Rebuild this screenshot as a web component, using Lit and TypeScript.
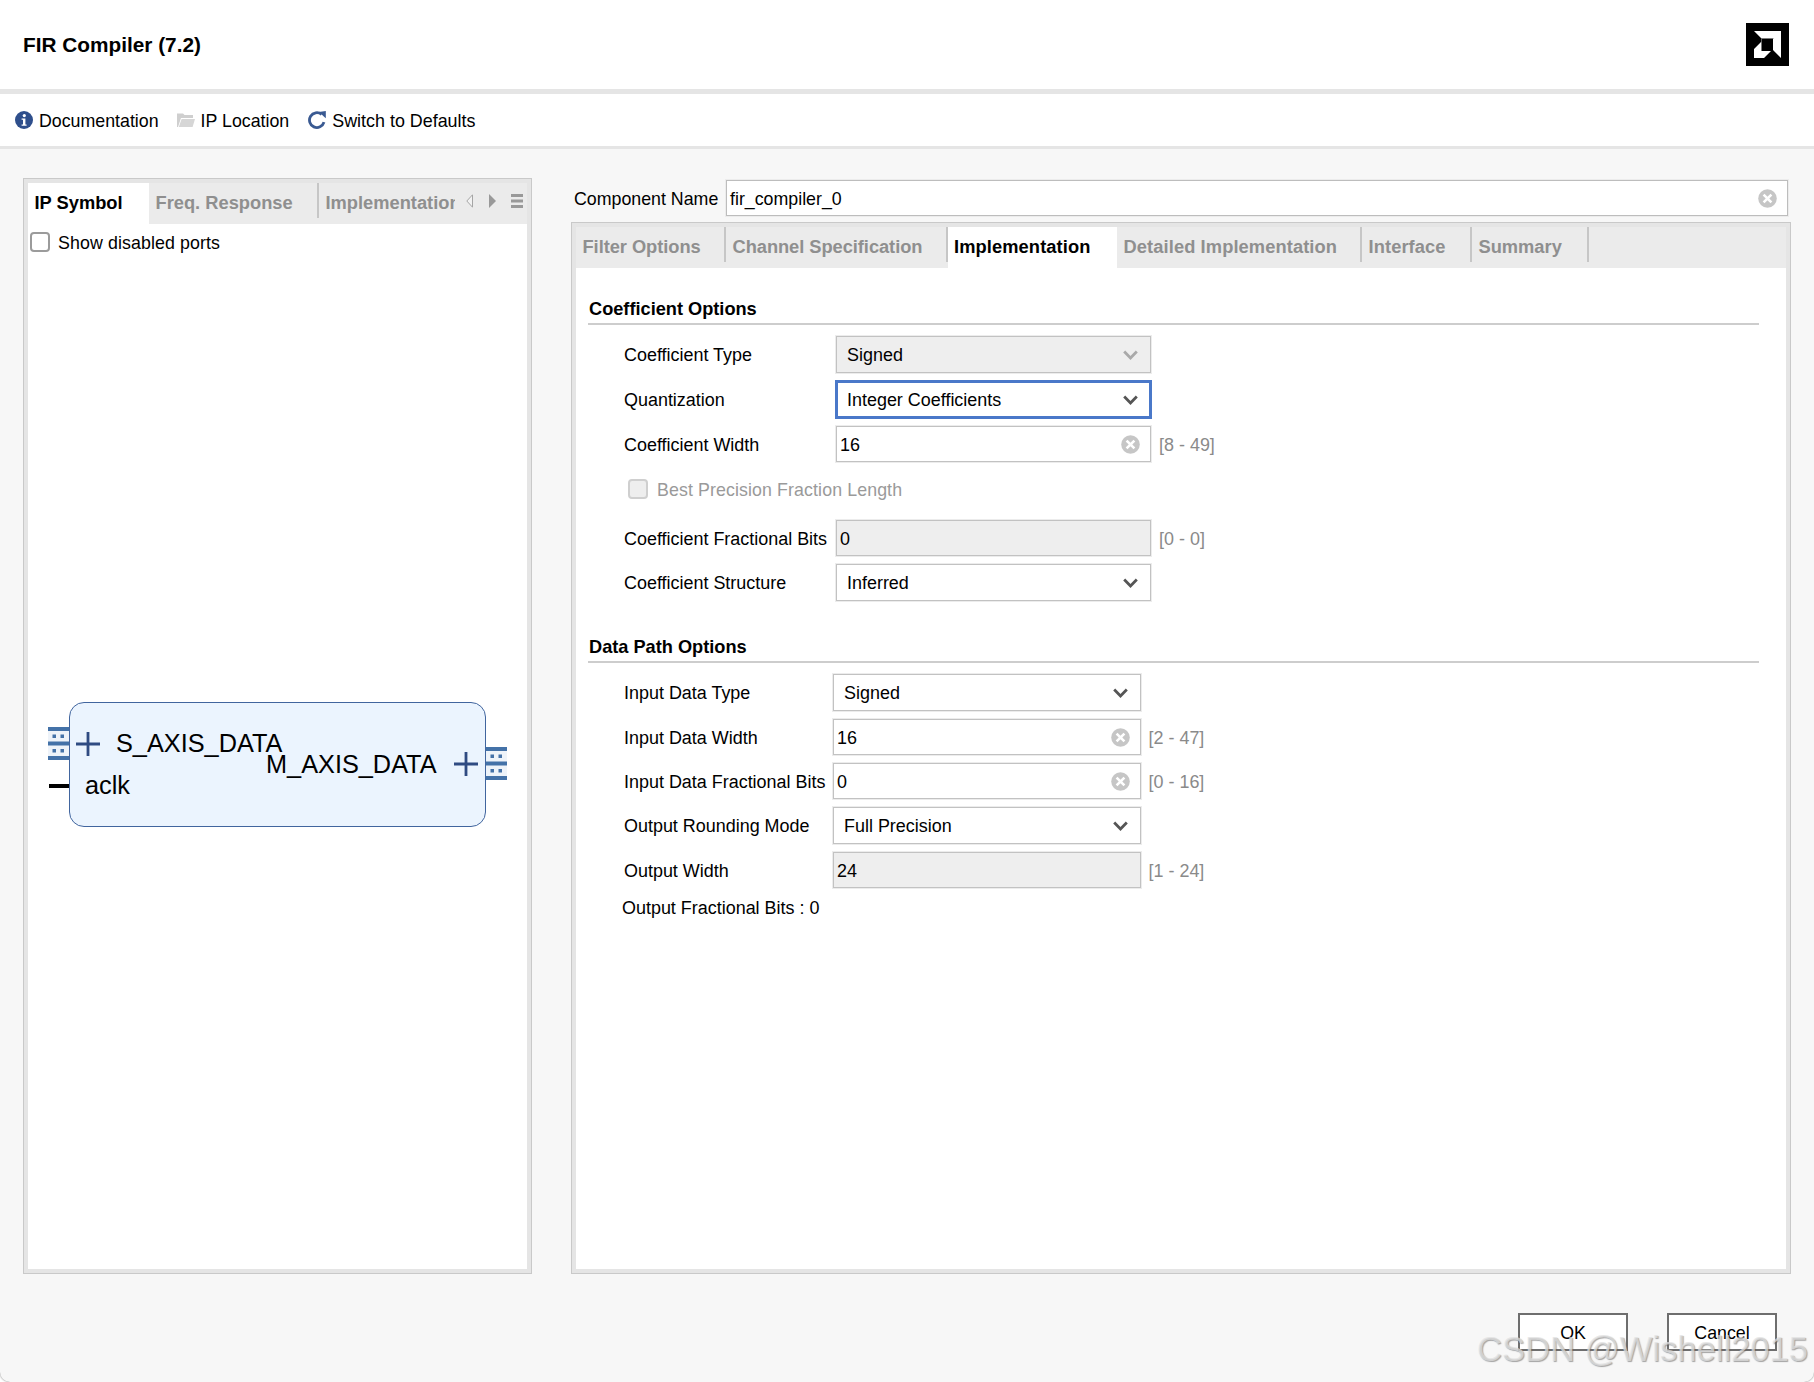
import { LitElement, html, css, svg } from "lit";
import { customElement } from "lit/decorators.js";

const clearIcon = () => html`<svg class="clear" width="19" height="19" viewBox="0 0 19 19"><circle cx="9.5" cy="9.5" r="9.3" fill="#c6c6c6"/><path d="M5.6 5.6l7.8 7.8M13.4 5.6l-7.8 7.8" stroke="#fff" stroke-width="2.6" fill="none"/></svg>`;
const chevron = (dis: boolean) => html`<svg class="chev" width="15" height="10" viewBox="0 0 15 10"><path d="M1.2 1.6L7.5 8l6.3-6.4" stroke="${dis ? "#a9a9a9" : "#555"}" stroke-width="2.8" fill="none"/></svg>`;

type Row = { label: string; kind: "sel" | "input" | "ro" | "seld" | "focus"; value: string; range?: string; h: number };

const coef: Row[] = [
  { label: "Coefficient Type", kind: "seld", value: "Signed", h: 37 },
  { label: "Quantization", kind: "focus", value: "Integer Coefficients", h: 37 },
  { label: "Coefficient Width", kind: "input", value: "16", range: "[8 - 49]", h: 36 },
];
const coef2: Row[] = [
  { label: "Coefficient Fractional Bits", kind: "ro", value: "0", range: "[0 - 0]", h: 36 },
  { label: "Coefficient Structure", kind: "sel", value: "Inferred", h: 37 },
];
const dataRows: Row[] = [
  { label: "Input Data Type", kind: "sel", value: "Signed", h: 37 },
  { label: "Input Data Width", kind: "input", value: "16", range: "[2 - 47]", h: 36 },
  { label: "Input Data Fractional Bits", kind: "input", value: "0", range: "[0 - 16]", h: 36 },
  { label: "Output Rounding Mode", kind: "sel", value: "Full Precision", h: 37 },
  { label: "Output Width", kind: "ro", value: "24", range: "[1 - 24]", h: 36 },
];

const busPort = svg`<svg width="21" height="33" viewBox="0 0 21 33">
  <rect width="21" height="33" fill="#eef3f9"/>
  <g fill="#4472a8"><rect width="21" height="4"/><rect y="14.500" width="21" height="4"/><rect y="29" width="21" height="4"/>
  <rect x="4.500" y="7.500" width="3.500" height="3.500"/><rect x="12.500" y="7.500" width="3.500" height="3.500"/><rect x="4.500" y="22" width="3.500" height="3.500"/><rect x="12.500" y="22" width="3.500" height="3.500"/></g></svg>`;
const plus = svg`<svg width="24" height="24" viewBox="0 0 24 24"><path d="M12 0v24M0 12h24" stroke="#2f4b82" stroke-width="2.8" fill="none"/></svg>`;

@customElement("app-root")
export class AppRoot extends LitElement {
  static styles = css`
    :host { display: block; width: 1814px; height: 1382px; background: #fff; font-family: "Liberation Sans", Arial, sans-serif; font-size: 17.8px; color: #000; position: relative; overflow: hidden; }
    * { box-sizing: border-box; }
    .win { height: 1382px; display: flex; flex-direction: column; background: #f7f7f7; border-radius: 0 0 10px 10px; box-shadow: 0 0 2px #777; }
    .head { height: 94px; flex: none; background: #fff; border-bottom: 5px solid #e5e5e5; display: flex; align-items: center; justify-content: space-between; padding: 0 25px 0 23px; }
    .title { font-weight: 700; font-size: 20.8px; padding-top: 1px; }
    .logo { display: block; }
    .tool { height: 55px; flex: none; background: #fff; border-bottom: 3px solid #e5e5e5; display: flex; align-items: center; padding-left: 15px; gap: 18px; }
    .ti { display: flex; align-items: center; gap: 6px; }
    .ti span { padding-top: 2px; }
    .ti:last-child { margin-left: 1px; font-size: 17.9px; }
    .main { flex: none; height: 1125px; padding: 29px 23px 0; display: flex; gap: 39px; }
    .left { width: 509px; height: 1096px; border: 1px solid #c9c9c9; background: #e5e5e5; padding: 4px; }
    .linner { height: 100%; background: #fff; display: flex; flex-direction: column; }
    .lstrip { height: 41px; flex: none; background: #ebebeb; display: flex; align-items: stretch; }
    .tab { font-weight: 700; font-size: 18.3px; color: #8f8f8f; display: flex; align-items: center; padding-left: 6.5px; padding-bottom: 2px; position: relative; white-space: nowrap; overflow: hidden; }
    .tab.on { background: #fff; color: #000; }
    .tab.sep::after { content: ""; position: absolute; right: 0; top: 0; height: 35px; width: 2px; background: #c6c6c6; }
    .tab.wide { letter-spacing: .1px; }
    .tab.tight { letter-spacing: -.05px; }
    .lt1 { width: 121px; } .lt2 { width: 170px; } .lt3 { width: 136px; }
    .ctrl { display: flex; flex: 1; align-items: center; padding-bottom: 5px; padding-left: 11px; gap: 15.5px; }
    .showrow { height: 36px; flex: none; display: flex; align-items: center; gap: 8px; padding: 0 0 0 2px; }
    .showrow span, .chk span { padding-top: 2px; letter-spacing: .1px; }
    .cb { width: 20px; height: 20px; border: 2px solid #9b9b9b; border-radius: 4px; background: #fff; flex: none; }
    .cb.dis { border-color: #cfcfcf; background: #eee; }
    .canvas { flex: 1; position: relative; }
    .sym { position: absolute; left: 41px; top: 442px; width: 417px; height: 125px; border: 1.3px solid #41659e; border-radius: 15px; background: #ebf4fe; }
    .bus { position: absolute; display: block; line-height: 0; }
    .bl { left: 20px; top: 467px; }
    .br { left: 458px; top: 487px; }
    .clk { position: absolute; left: 21px; top: 524px; width: 20px; height: 3.5px; background: #000; }
    .pm { position: absolute; display: block; line-height: 0; }
    .pl { left: 48px; top: 472px; }
    .pr { left: 426px; top: 492px; }
    .stx { position: absolute; font-size: 25.3px; line-height: 30px; white-space: nowrap; }
    .right { width: 1220px; display: flex; flex-direction: column; padding-top: 2px; }
    .cname { display: flex; align-items: center; height: 36px; flex: none; padding-left: 3px; }
    .cname .cl { width: 152px; white-space: nowrap; padding-top: 2px; }
    .field { flex: none; width: 1062px; height: 36px; background: #fff; border: 1px solid #bdbdbd; box-shadow: 0 0 0 1px #ececec; display: flex; align-items: center; justify-content: space-between; padding: 0 10px 0 3px; }
    .field span { padding-top: 2px; }
    .rpanel { margin-top: 6px; width: 1220px; height: 1052px; border: 1px solid #c9c9c9; background: #e5e5e5; padding: 4px; }
    .rinner { height: 100%; background: #fff; display: flex; flex-direction: column; }
    .rstrip { height: 41px; flex: none; background: #ebebeb; display: grid; grid-template-columns: 150px 221.5px 169.5px 245px 110px 117px 1fr; }
    .sec { padding-left: 12px; font-size: 17.95px; }
    .sh { width: 1171px; height: 28px; border-bottom: 2px solid #cdcdcd; font-weight: 700; font-size: 18.2px; line-height: 24px; padding-left: 1px; margin-bottom: 11px; }
    .sec1 { margin-top: 29px; }
    .sec2 { margin-top: 34px; }
    .rows { display: flex; flex-direction: column; gap: 8px; padding-left: 36px; }
    .row { display: flex; align-items: stretch; }
    .lb { display: flex; align-items: center; white-space: nowrap; flex: none; padding-top: 1px; }
    .sec1 .lb { width: 212px; } .sec2 .lb { width: 209px; }
    .ctl { flex: none; border: 1px solid #c2c2c2; box-shadow: 0 0 0 1px #ececec; background: #fff; display: flex; align-items: center; justify-content: space-between; padding: 0 10px 0 3px; }
    .ctl span { padding-top: 1px; }
    .sec1 .ctl { width: 315px; } .sec2 .ctl { width: 307.5px; }
    .ctl.sel, .ctl.seld, .ctl.focus { padding-left: 10px; padding-right: 12px; }
    .ctl.ro, .ctl.seld { background: #eee; }
    .ctl.focus { border: 3px solid #4a78c9; box-shadow: none; margin: -1px; padding-left: 9px; padding-right: 11px; }
    .sec1 .ctl.focus { width: 317px; }
    .rng { display: flex; align-items: center; margin-left: 8px; color: #8a8a8a; padding-top: 1px; }
    .even .lb, .even .rng { padding-top: 3px; }
    .even .ctl span { padding-top: 3px; }
    .chk { height: 38px; margin-bottom: 4px; display: flex; align-items: center; gap: 9px; padding-left: 4px; color: #9a9a9a; font-size: 17.8px; }
    .ofb { height: 24px; display: flex; align-items: center; margin-left: -2px; }
    .foot { flex: 1; display: flex; justify-content: flex-end; gap: 39px; padding: 39px 37px 0 0; }
    .btn { width: 110px; height: 38px; background: #fff; border: 2px solid #6e6e6e; display: flex; align-items: center; justify-content: center; padding-top: 3px; }
    .wm { position: absolute; left: 1477px; top: 1329px; font-size: 34.6px; line-height: 40px; color: rgba(226,226,226,.72); text-shadow: 1px 1px 1px rgba(95,95,95,.55); white-space: nowrap; }
  `;

  private renderRow(r: Row) {
    const isSel = r.kind === "sel" || r.kind === "seld" || r.kind === "focus";
    return html`<div class="row ${r.h === 36 ? "even" : ""}" style="height:${r.h}px">
      <div class="lb">${r.label}</div>
      <div class="ctl ${r.kind}">
        <span>${r.value}</span>
        ${isSel ? chevron(r.kind === "seld") : r.kind === "input" ? clearIcon() : ""}
      </div>
      ${r.range ? html`<div class="rng">${r.range}</div>` : ""}
    </div>`;
  }

  render() {
    return html`<div class="win">
      <div class="head">
        <div class="title">FIR Compiler (7.2)</div>
        <svg class="logo" width="43" height="43" viewBox="0 0 43 43">
          <rect width="43" height="43" fill="#000"/>
          <path d="M8 8h27v27l-8-8V15.500H15.500z" fill="#fff"/>
          <path d="M8 26l7.500-7.500v9.500H25l-7 7H8z" fill="#fff"/>
          <path d="M15.500 27.500v-12h12" fill="none" stroke="#777" stroke-width=".8"/>
        </svg>
      </div>
      <div class="tool">
        <div class="ti">
          <svg width="18" height="18" viewBox="0 0 18 18"><circle cx="9" cy="9" r="9" fill="#2f4f8c"/><circle cx="9.300" cy="4.600" r="1.600" fill="#fff"/><path d="M6.600 7.400h3.800v6h1.200v1.400H6.600v-1.400h1.400V8.800H6.600z" fill="#fff"/></svg>
          <span>Documentation</span>
        </div>
        <div class="ti">
          <svg width="18" height="18" viewBox="0 0 18 18"><path d="M0 2.500h6l1.500 1.500H16V7H4L1 16H0z" fill="#cfcfcf"/><path d="M4.600 8H18l-2.400 8H1.800z" fill="#d6d6d6"/></svg>
          <span>IP Location</span>
        </div>
        <div class="ti">
          <svg width="18" height="18" viewBox="0 0 18 18"><path d="M16 11.200A7.400 7.400 0 1 1 13.600 3.400" fill="none" stroke="#3a5a92" stroke-width="2.800"/><path d="M10.800 1L17.800 0v7.200z" fill="#3a5a92"/></svg>
          <span>Switch to Defaults</span>
        </div>
      </div>
      <div class="main">
        <div class="left">
          <div class="linner">
            <div class="lstrip">
              <div class="tab on lt1">IP Symbol</div>
              <div class="tab sep lt2">Freq. Response</div>
              <div class="tab lt3">Implementation</div>
              <div class="ctrl">
                <svg width="7" height="14" viewBox="0 0 7 14"><path d="M6.500 .8L.8 7l5.700 6.200z" fill="#f2f2f2" stroke="#a5a5a5"/></svg>
                <svg width="7" height="14" viewBox="0 0 7 14"><path d="M0 0l7 7-7 7z" fill="#999"/></svg>
                <svg width="12" height="14" viewBox="0 0 12 14"><path d="M0 0h12v3H0zM0 5.500h12v3H0zM0 11h12v3H0z" fill="#999"/></svg>
              </div>
            </div>
            <div class="showrow"><div class="cb"></div><span>Show disabled ports</span></div>
            <div class="canvas">
              <div class="sym"></div>
              <div class="bus bl">${busPort}</div>
              <div class="bus br">${busPort}</div>
              <div class="clk"></div>
              <div class="pm pl">${plus}</div>
              <div class="pm pr">${plus}</div>
              <div class="stx" style="left:88px;top:468px">S_AXIS_DATA</div>
              <div class="stx" style="left:238px;top:489px">M_AXIS_DATA</div>
              <div class="stx" style="left:57px;top:510px">aclk</div>
            </div>
          </div>
        </div>
        <div class="right">
          <div class="cname">
            <div class="cl">Component Name</div>
            <div class="field"><span>fir_compiler_0</span>${clearIcon()}</div>
          </div>
          <div class="rpanel">
            <div class="rinner">
              <div class="rstrip">
                <div class="tab sep tight">Filter Options</div>
                <div class="tab sep tight">Channel Specification</div>
                <div class="tab on wide">Implementation</div>
                <div class="tab sep wide">Detailed Implementation</div>
                <div class="tab sep wide">Interface</div>
                <div class="tab sep">Summary</div>
              </div>
              <div class="sec sec1">
                <div class="sh">Coefficient Options</div>
                <div class="rows">
                  ${coef.map((r) => this.renderRow(r))}
                  <div class="chk"><div class="cb dis"></div><span>Best Precision Fraction Length</span></div>
                  ${coef2.map((r) => this.renderRow(r))}
                </div>
              </div>
              <div class="sec sec2">
                <div class="sh">Data Path Options</div>
                <div class="rows">
                  ${dataRows.map((r) => this.renderRow(r))}
                  <div class="ofb">Output Fractional Bits : 0</div>
                </div>
              </div>
            </div>
          </div>
        </div>
      </div>
      <div class="foot">
        <div class="btn">OK</div>
        <div class="btn">Cancel</div>
      </div>
    </div>
    <div class="wm">CSDN @Wishell2015</div>`;
  }
}
